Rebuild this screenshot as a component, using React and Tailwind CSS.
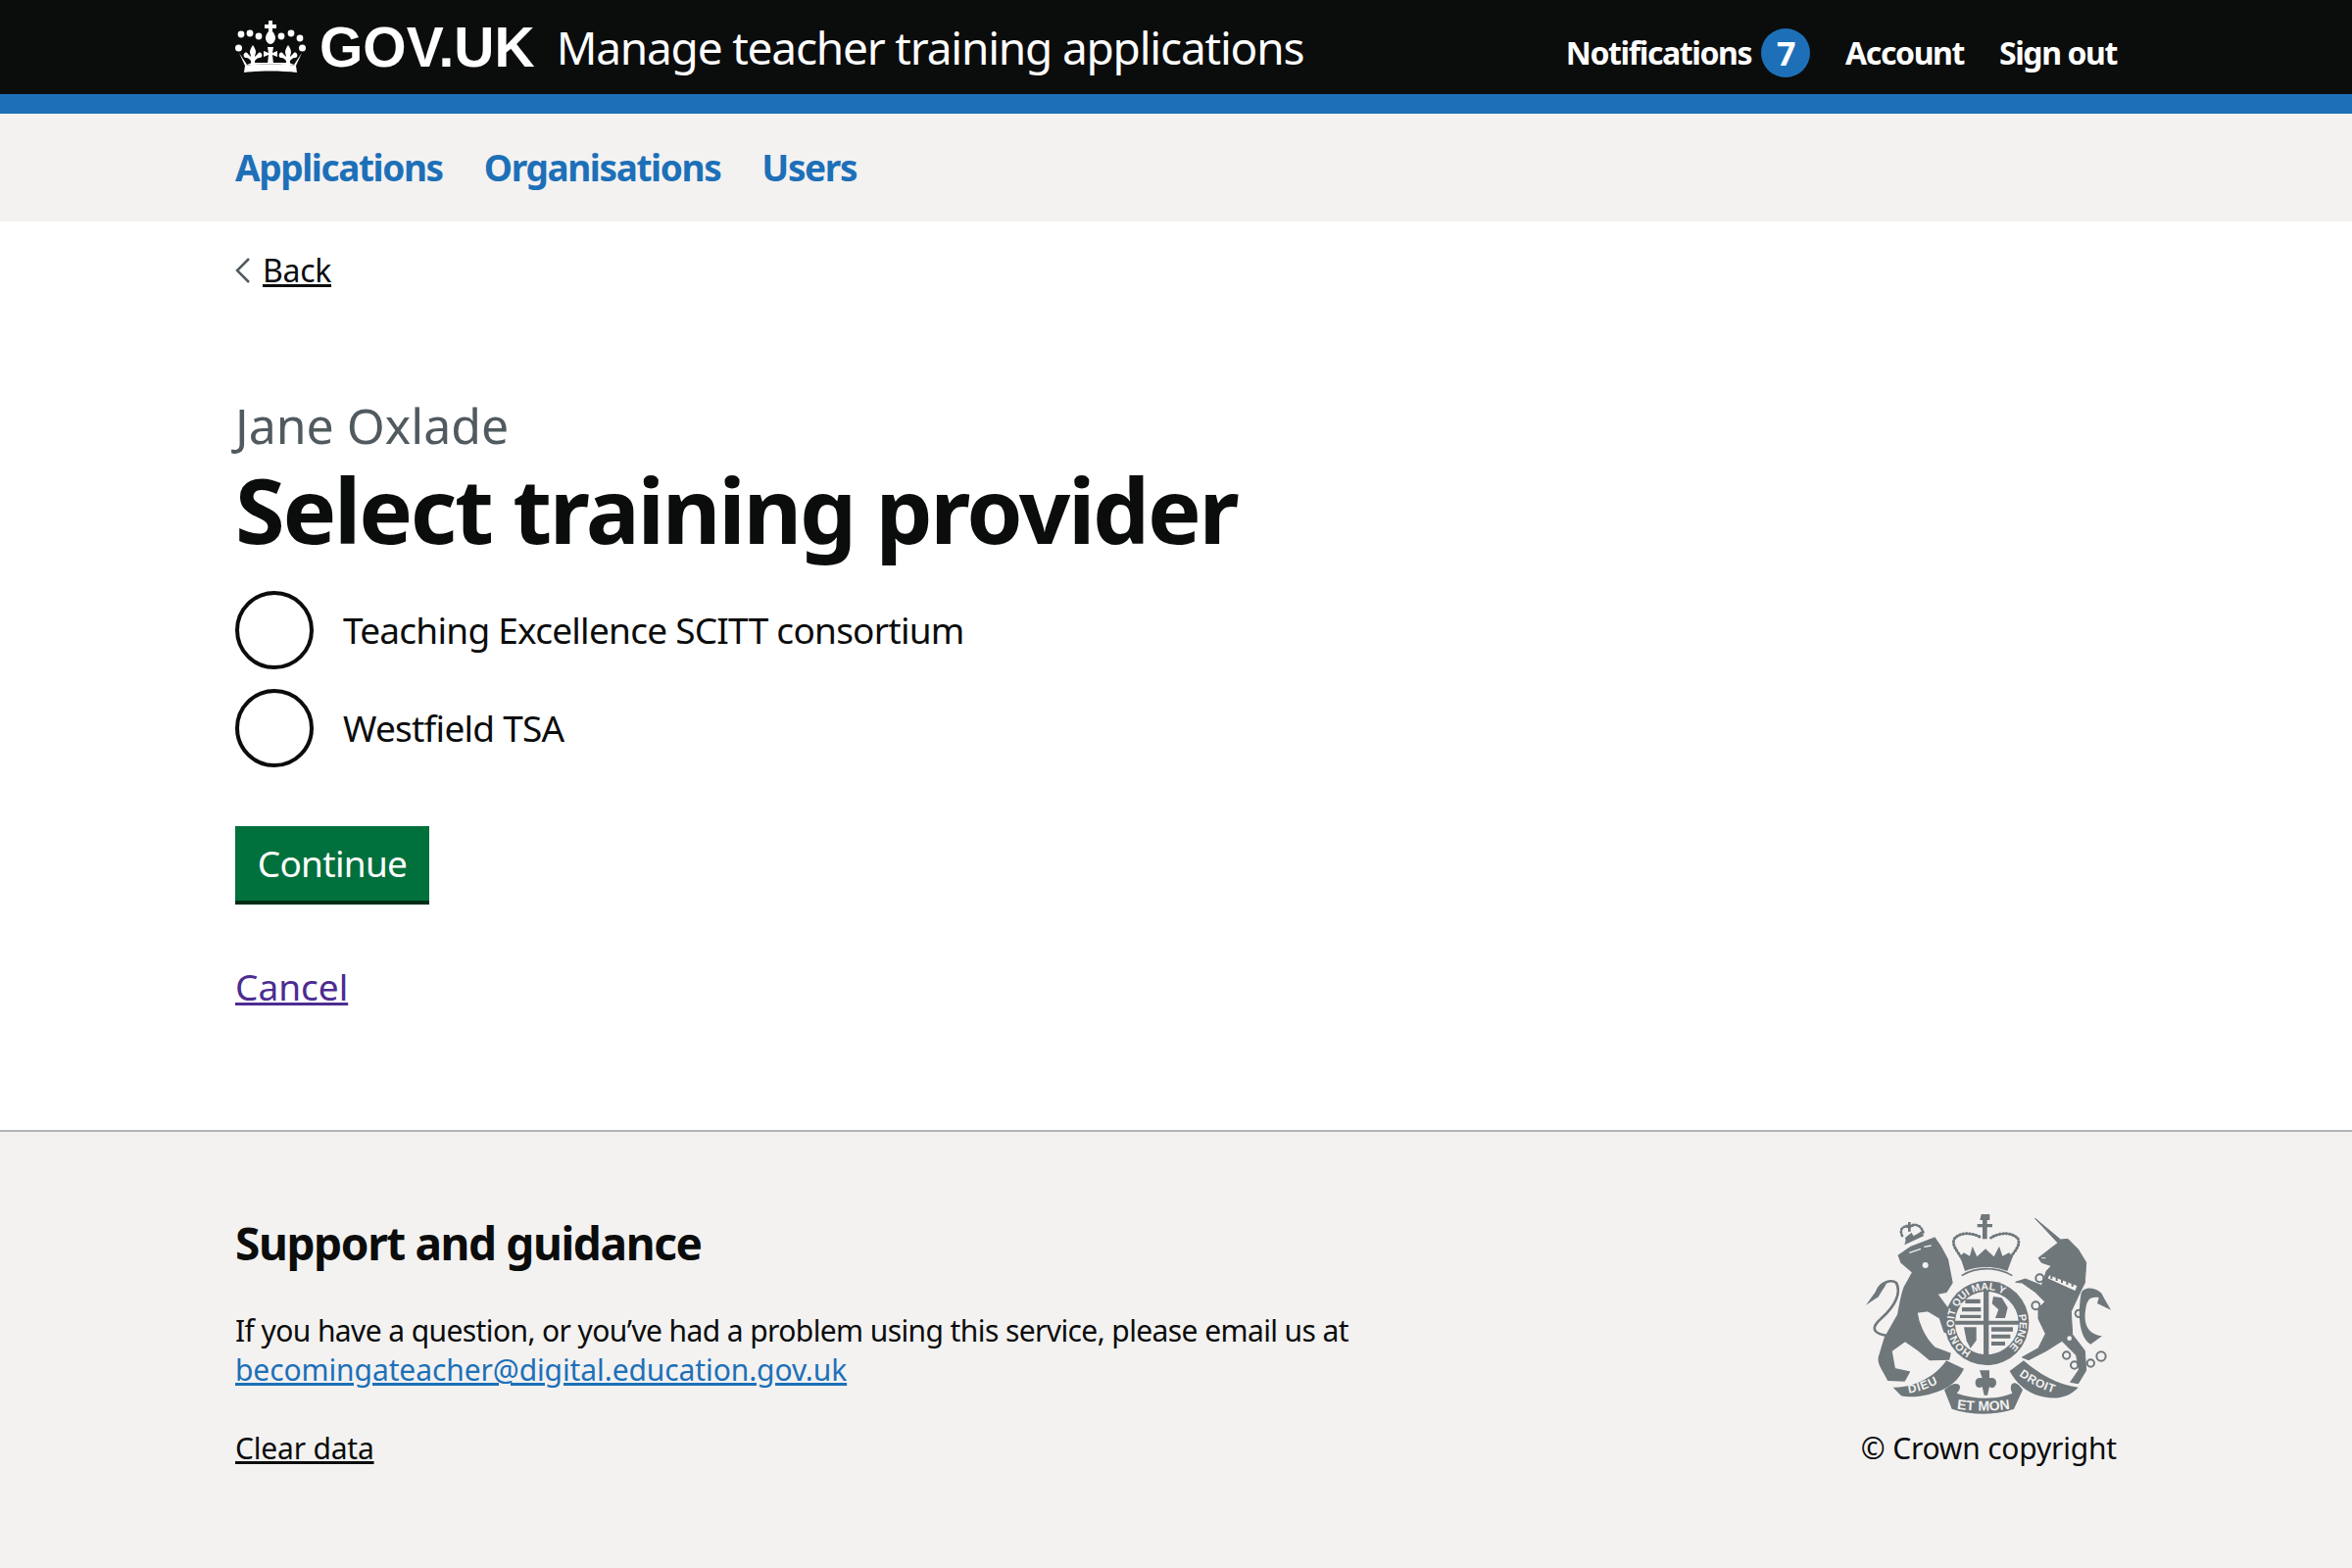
import React from 'react';

const font = { fontFamily: '"Noto Sans", sans-serif' };

const Fleur = ({ x }) => (
    <path transform={`translate(${x} 0)`} d="M0 25c2 3 3 5 3 7 0 2-1 3-1 5l3-3c1-2 3-2 4 0 1 2 0 4-2 4-1 0-2 0-3 1l-2 2v5H-2v-5l-2-2c-1-1-2-1-3-1-2 0-3-2-2-4 1-2 3-2 4 0l3 3c0-2-1-3-1-5 0-2 1-4 3-7z" />
);

const Crown = () => (
    <svg width="72" height="54" viewBox="0 0 72 54" fill="white" className="shrink-0">
        <path d="M34 0h4v4h4v4h-4v3c2 2 3 5 3 7 0 2-2 6-5 6s-5-4-5-6c0-2 1-5 3-7V8h-4V4h4z" />
        <circle cx="6" cy="14" r="3.4" /><circle cx="15" cy="13" r="3.4" /><circle cx="24" cy="16" r="3.4" />
        <circle cx="47" cy="16" r="3.4" /><circle cx="57" cy="13" r="3.4" /><circle cx="66" cy="18" r="3.4" />
        <circle cx="3.5" cy="28" r="3.5" /><circle cx="68.5" cy="28" r="3.5" />
        <Fleur x={18} /><Fleur x={54} />
        <path d="M33 27h6l-1 6 5-2v6l-5-2 1 9h-6l1-9-5 2v-6l5 2z" />
        <path d="M4 33l8 12 5-2h38l5 2 8-12-6 13c-14-2-38-2-52 0z" />
        <path d="M10 46c16-2 36-2 52 0l1 7c-16-2-38-2-54 0z" />
    </svg>
);

const Crest = () => (
    <svg width="260" height="210" viewBox="60 40 780 630" fill="#6f777b" className="block">
        <defs>
            <path id="garter-top" d="M348 419 A100 100 0 0 1 532 341" />
            <path id="garter-left" d="M395 473 A100 100 0 0 1 346 416" />
            <path id="garter-right" d="M539 360 A100 100 0 0 1 506 462" />
            <path id="scroll-left" d="M203 600 Q270 590 330 545" />
            <path id="scroll-right" d="M540 545 Q600 590 676 607" />
            <path id="scroll-mid" d="M350 648 Q440 660 530 645" />
        </defs>
        {/* lion */}
        <path strokeLinejoin="round" stroke="#6f777b" strokeWidth="4" d="M172 178 L210 152 L282 124 L300 150 L322 190 L336 262 L318 290 L290 296 L322 340 L340 372 L335 420 L312 412 L298 370 L262 348 L228 352 C232 385 250 430 282 460 L330 478 L326 496 L268 498 L232 468 L192 440 L150 470 L160 525 L205 535 L190 562 L140 560 C125 530 108 510 112 490 L130 430 L170 360 C178 320 180 300 190 275 L215 230 L180 200 Z" />
        <path d="M150 425 C90 420 85 400 120 370 C165 330 180 290 165 262 C150 250 115 260 105 290" fill="none" stroke="#6f777b" strokeWidth="8" />
        <path d="M115 270 L72 330 L110 305 L135 265 Z" />
        <circle cx="254" cy="208" r="9" fill="#f3f2f1" />
        <path d="M205 170 L240 158 M250 152 L272 148" stroke="#f3f2f1" strokeWidth="4" />
        {/* lion's crown */}
        <path d="M190 146 L250 118 L240 108 L195 128 Z" />
        <path d="M183 118 C172 95 190 85 205 92 C215 80 240 80 248 110" fill="none" stroke="#6f777b" strokeWidth="8" strokeDasharray="3 7" strokeLinecap="round" />
        <path d="M201 76h8v8h8v7h-8v14h-8V91h-8v-7h8z" />
        <path d="M192 124 L212 108 L218 120 L242 104 L248 116 L196 140 Z" />
        {/* unicorn */}
        <path strokeLinejoin="round" stroke="#6f777b" strokeWidth="3" d="M590 65 L668 130 L690 128 L722 160 L746 200 L742 262 L728 290 L700 350 L704 420 L742 470 L746 530 L722 570 L698 566 L724 528 L716 484 L672 440 L625 470 L570 498 L550 490 L600 462 L622 418 L600 372 L600 340 L620 320 L590 290 L550 262 L530 260 L560 250 L610 270 L625 225 L640 210 L610 200 L600 186 L640 155 L660 140 Z" />
        <path d="M730 300 C730 270 790 270 800 310 C760 300 750 310 745 340 C735 400 760 420 795 425 L760 450 C725 430 720 360 730 300Z" />
        <path d="M790 290 L822 345 L780 325 Z" />
        <path d="M632 235 L722 270 L714 290 L625 250 Z" fill="#f3f2f1" stroke="#6f777b" strokeWidth="6" />
        <path d="M640 240v10M656 246v10M672 252v10M688 258v10M704 264v10" stroke="#6f777b" strokeWidth="6" />
        <path d="M610 186h12" stroke="#f3f2f1" strokeWidth="3" />
        <g fill="none" stroke="#6f777b" strokeWidth="6">
            <circle cx="604" cy="248" r="12" /><circle cx="592" cy="332" r="12" /><circle cx="724" cy="356" r="11" />
            <circle cx="686" cy="484" r="11" /><circle cx="710" cy="514" r="11" /><circle cx="760" cy="508" r="11" /><circle cx="792" cy="487" r="14" />
        </g>
        <circle cx="695" cy="432" r="7" fill="#f3f2f1" /><circle cx="718" cy="404" r="7" fill="#f3f2f1" />
        {/* royal crown */}
        <path d="M425 52h26v18h-8v12h16v10h-16v36h-14V92h-16V82h16V70h-8z" />
        <path d="M372 198 C350 160 335 150 342 128 C360 105 400 108 425 124 M505 198 C530 160 545 150 538 128 C520 105 480 108 455 124" fill="none" stroke="#6f777b" strokeWidth="9" strokeDasharray="2 8" strokeLinecap="round" />
        <path d="M360 180 L372 170 L390 180 L398 150 L412 182 L438 158 L464 182 L480 150 L490 180 L510 170 L522 180 L505 226 C465 210 415 210 375 226 Z" />
        <path d="M365 240 C410 212 475 212 520 240" fill="none" stroke="#6f777b" strokeWidth="5" />
        {/* garter and shield */}
        <circle cx="442" cy="385" r="129" />
        <path d="M432 378 H345 A97 97 0 0 1 432 289 Z" fill="#f3f2f1" />
        <path d="M448 289 A97 97 0 0 1 539 378 H448 Z" fill="#f3f2f1" />
        <path d="M345 390 H432 V481 A97 97 0 0 1 345 390 Z" fill="#f3f2f1" />
        <path d="M448 481 V390 H539 A97 97 0 0 1 448 481 Z" fill="#f3f2f1" />
        <g fill="#6f777b">
            <path d="M376 312h46v13h-46zM366 337h58v13h-58zM360 360h64v10h-64z" />
            <path d="M462 304l26 4 18 30-8 32h-30l10-26-20-18z" />
            <path d="M372 398h38v40l-18 24-12-22z" />
            <path d="M456 398h66v13h-66zM456 420h58v12h-58zM456 442h42v12h-42z" />
        </g>
        <g fill="#f3f2f1" fontSize="32" fontFamily="Liberation Sans, sans-serif" fontWeight="700">
            <text><textPath href="#garter-top">SOIT QUI MAL Y</textPath></text>
            <text><textPath href="#garter-right">PENSE</textPath></text>
            <text><textPath href="#garter-left">HON</textPath></text>
        </g>
        {/* scrolls */}
        <path d="M155 582 C215 585 285 550 318 500 L372 525 C355 560 330 580 300 592 C255 610 210 615 180 608 Z" />
        <path d="M555 500 C600 540 660 575 722 582 C690 618 640 622 590 604 C555 590 530 565 512 532 Z" />
        <path d="M312 590 C350 555 375 575 350 600 C410 620 470 620 520 600 C505 570 530 552 552 590 L525 648 C470 668 395 668 335 648 Z" />
        <path d="M420 530h30v24c16-4 24 6 20 20-4 10-14 12-20 6l-6 26h-10l-6-26c-8 6-18 2-20-6-4-14 4-24 20-20z" />
        <g fill="#f3f2f1" fontFamily="Liberation Sans, sans-serif" fontWeight="700">
            <text fontSize="36" letterSpacing="3"><textPath href="#scroll-left">DIEU</textPath></text>
            <text fontSize="36" letterSpacing="2"><textPath href="#scroll-right">DROIT</textPath></text>
            <text fontSize="42"><textPath href="#scroll-mid">ET MON</textPath></text>
        </g>
    </svg>
);

const Radio = ({ label }) => (
    <div className="flex items-center gap-[30px]">
        <span className="w-20 h-20 rounded-full border-4 border-[#0b0c0c] bg-white shrink-0" />
        <span className="text-[37px] leading-[50px] tracking-[-0.75px] text-[#0b0c0c]">{label}</span>
    </div>
);

export default function App() {
    return (
        <div className="min-h-[1600px] flex flex-col bg-white text-[#0b0c0c]" style={font}>
            <header className="h-[116px] bg-[#0b0c0c] border-b-[20px] border-[#1d70b8] text-white">
                <div className="w-[1920px] mx-auto flex items-center justify-between h-full">
                    <div className="flex items-center">
                        <Crown />
                        <span className="ml-[14px] text-[57px] leading-none font-bold font-['Liberation_Sans']">GOV.UK</span>
                        <span className="ml-[22px] text-[46px] leading-none tracking-[-1.2px]">Manage teacher training applications</span>
                    </div>
                    <nav className="flex items-center text-[32px] font-bold tracking-[-1.4px] pt-3">
                        <span>Notifications</span>
                        <span className="ml-[10px] w-[50px] h-[50px] rounded-full bg-[#1d70b8] flex items-center justify-center text-[34px] font-bold">7</span>
                        <span className="ml-9">Account</span>
                        <span className="ml-9">Sign out</span>
                    </nav>
                </div>
            </header>

            <div className="h-[110px] bg-[#f3f2f1]">
                <nav className="w-[1920px] mx-auto h-full flex items-center gap-[42px] text-[37px] font-bold tracking-[-1.4px] text-[#1d70b8]">
                    <a>Applications</a>
                    <a>Organisations</a>
                    <a>Users</a>
                </nav>
            </div>

            <main className="w-[1920px] mx-auto flex-1">
                <div className="flex items-center gap-3 mt-[30px] text-[32px] leading-10 tracking-[-0.3px]">
                    <svg width="16" height="26" viewBox="0 0 16 26" fill="none" stroke="#505a5f" strokeWidth="2.5"><path d="M14 1 2 13l12 12" /></svg>
                    <a className="underline">Back</a>
                </div>
                <p className="mt-[108px] text-[50px] leading-[60px] text-[#505a5f]">Jane Oxlade</p>
                <h1 className="mt-px text-[92px] leading-[110px] font-bold tracking-[-2.3px]">Select training provider</h1>
                <div className="mt-[28px] flex flex-col gap-5">
                    <Radio label="Teaching Excellence SCITT consortium" />
                    <Radio label="Westfield TSA" />
                </div>
                <button className="mt-[60px] block w-[198px] h-[76px] mb-1 bg-[#00703c] shadow-[0_4px_0_#002d18] text-white text-[37px] tracking-[-0.7px]">Continue</button>
                <a className="block mt-[63px] text-[37px] leading-[50px] underline text-[#4c2c92]">Cancel</a>
            </main>

            <footer className="h-[447px] bg-[#f3f2f1] border-t-2 border-[#b1b4b6]">
                <div className="w-[1920px] mx-auto flex justify-between pt-[80px]">
                    <div className="w-[1300px]">
                        <h2 className="mt-[3px] text-[46px] leading-[60px] font-bold tracking-[-1.4px]">Support and guidance</h2>
                        <p className="mt-10 text-[30px] leading-10 tracking-[-0.6px]">If you have a question, or you’ve had a problem using this service, please email us at<br /><a className="underline text-[#1d70b8] tracking-[-0.1px]">becomingateacher@digital.education.gov.uk</a></p>
                        <a className="block mt-10 text-[30px] leading-10 underline tracking-[-0.2px]">Clear data</a>
                    </div>
                    <div className="flex flex-col items-end">
                        <Crest />
                        <span className="mt-[13px] text-[30px] leading-10 tracking-[-0.2px]">© Crown copyright</span>
                    </div>
                </div>
            </footer>
        </div>
    );
}
